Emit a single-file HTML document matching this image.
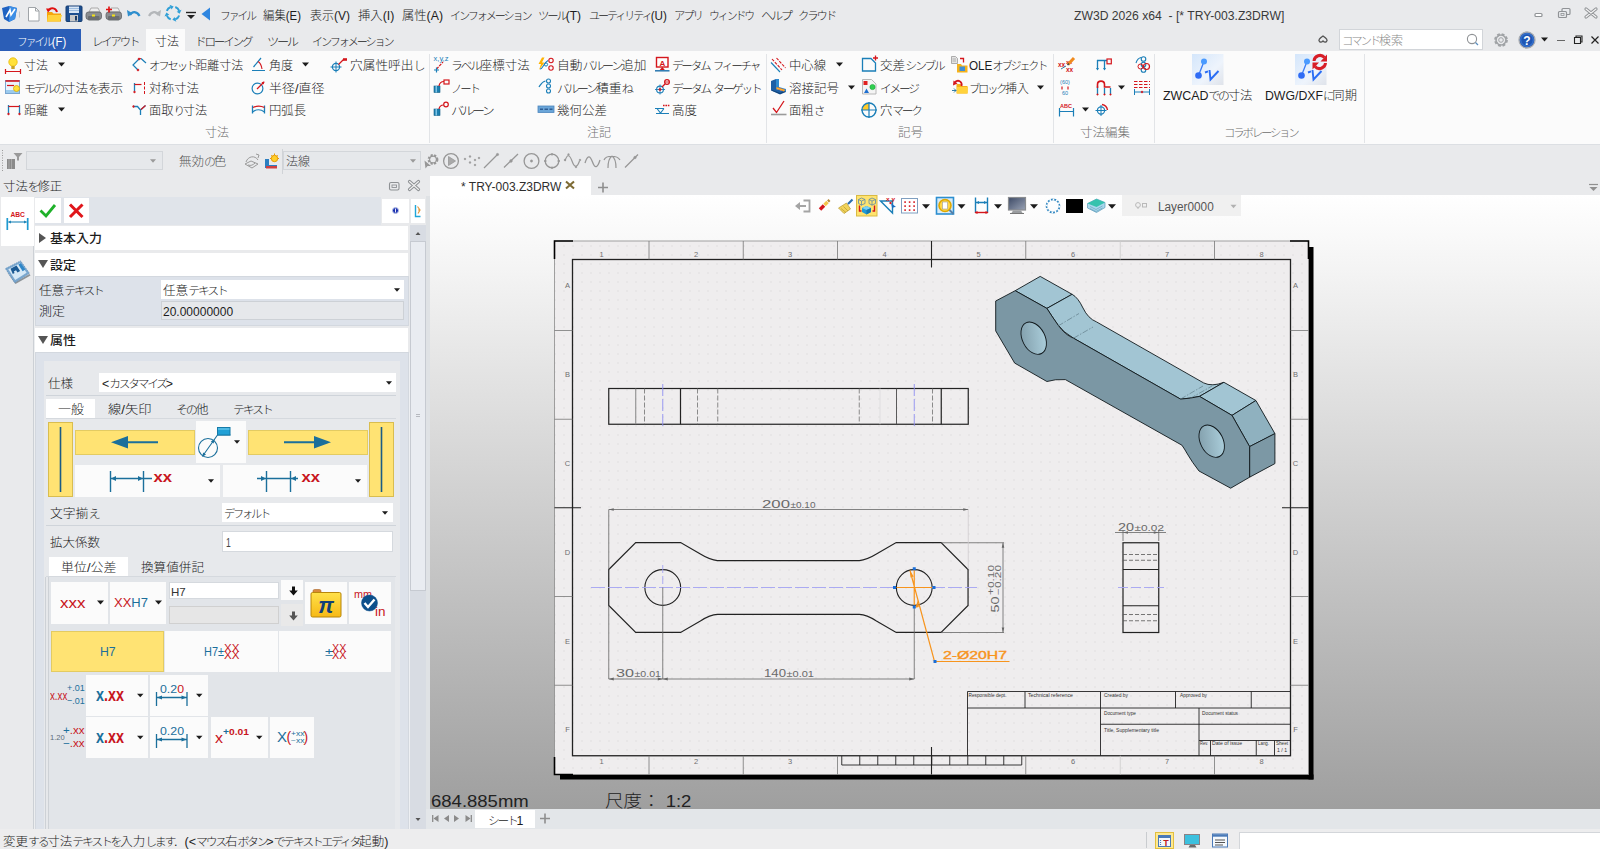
<!DOCTYPE html><html lang="ja"><head><meta charset="utf-8"><title>ZW3D 2026 x64 - [* TRY-003.Z3DRW]</title><style>

html,body{margin:0;padding:0}
body{width:1600px;height:849px;overflow:hidden;background:#e9eaec;position:relative;font-family:"Liberation Sans","Noto Sans CJK JP",sans-serif;color:#1c1c1c;font-weight:300}
div{position:absolute}
.t{position:absolute;white-space:nowrap;display:inline-block;transform-origin:0 50%}
.t i{font-style:normal;font-size:.95em;letter-spacing:-.19em}
svg{position:absolute;left:0;top:0}
svg text{font-family:"Liberation Sans","Noto Sans CJK JP",sans-serif}
.z{font-size:7.5px;fill:#6e6e6e;text-anchor:middle}
.dm{font-size:10.5px;fill:#6a6a6a}
.dt{font-size:8.5px;fill:#6a6a6a}
.an{font-size:10.5px;fill:#f7941d;stroke:#f7941d;stroke-width:.35px}
.tb{font-size:4.6px;fill:#333}

</style></head><body>
<div style="left:430px;top:195px;width:1170px;height:614px;background:linear-gradient(#ffffff 0%,#f4f4f4 12%,#9f9f9f 100%);"></div>
<div style="left:1121.5px;top:195px;width:119.5px;height:21px;background:#f0f0f0;"></div>
<span id="t1" class="t" style="left:1158px;top:198px;font-size:12px;line-height:18px;color:#555;transform:scaleX(0.9825);">Layer0000</span>
<span id="t2" class="t" style="left:431px;top:791.8px;font-size:17px;line-height:20px;color:#222;transform:scaleX(1.0889);">684.885mm</span>
<span id="t3" class="t" style="left:605px;top:791.8px;font-size:17px;line-height:20px;color:#222;transform:scaleX(1.0886);white-space:pre;">尺度： 1:2</span>
<div style="left:0px;top:176px;width:430px;height:653px;background:#e9eaec;"></div>
<div style="left:0px;top:196px;width:34px;height:633px;background:#e9eaec;"></div>
<div style="left:1px;top:197px;width:32.5px;height:49px;background:#fff;"></div>
<div style="left:32.5px;top:246px;width:3px;height:583px;background:#eceef0;border:0 solid #ccd0d5;border-width:0 1px;box-sizing:border-box;"></div>
<div style="left:36px;top:196px;width:372px;height:633px;background:#dde2ea;"></div>
<div style="left:408px;top:196px;width:2px;height:633px;background:#eef0f3;"></div>
<div style="left:410px;top:224.5px;width:15.5px;height:604.5px;background:#d8dce3;"></div>
<div style="left:410px;top:241px;width:15.5px;height:350px;background:#e9ecf1;border:1px solid #c6cad1;box-sizing:border-box;"></div>
<div style="left:425.5px;top:196px;width:4.5px;height:633px;background:#dfe2e5;"></div>
<div style="left:34px;top:196px;width:392px;height:29px;background:#e9eaec;"></div>
<div style="left:35px;top:197px;width:346px;height:27.5px;background:#e0e4ea;"></div>
<div style="left:35px;top:198px;width:26px;height:25px;background:#fff;"></div>
<div style="left:64px;top:198px;width:25px;height:25px;background:#fff;"></div>
<div style="left:382px;top:198.5px;width:27px;height:24.5px;background:#fff;"></div>
<div style="left:411px;top:198.5px;width:14px;height:24.5px;background:#fff;"></div>
<div style="left:35px;top:225px;width:375px;height:128px;background:#e9eaec;"></div>
<div style="left:35px;top:276px;width:374px;height:50px;background:#d3d8df;"></div>
<div style="left:36px;top:277px;width:372px;height:48px;background:#dde2ea;"></div>
<div style="left:35px;top:352px;width:374px;height:477px;background:#d3d8df;"></div>
<div style="left:36px;top:353px;width:372px;height:476px;background:#dde2ea;"></div>
<div style="left:35px;top:226px;width:373px;height:24px;background:#fff;"></div>
<span id="t4" class="t" style="left:50px;top:230px;font-size:12px;line-height:18px;font-weight:500;transform:scaleX(1.0833);">基本入力</span>
<div style="left:35px;top:253px;width:373px;height:23px;background:#fff;"></div>
<span id="t5" class="t" style="left:50px;top:256.5px;font-size:12px;line-height:18px;font-weight:500;transform:scaleX(1.0833);">設定</span>
<div style="left:35px;top:328px;width:373px;height:24px;background:#fff;"></div>
<span id="t6" class="t" style="left:50px;top:332px;font-size:12px;line-height:18px;font-weight:500;transform:scaleX(1.0833);">属性</span>
<span id="t7" class="t" style="left:39px;top:282px;font-size:12px;line-height:18px;transform:scaleX(1.0492);">任意<i>テキスト</i></span>
<span id="t8" class="t" style="left:39px;top:303px;font-size:12px;line-height:18px;transform:scaleX(1.0833);">測定</span>
<div style="left:161px;top:280px;width:243px;height:19px;background:#fff;"></div>
<span id="t9" class="t" style="left:163px;top:282px;font-size:12px;line-height:18px;transform:scaleX(1.0492);">任意<i>テキスト</i></span>
<div style="left:161px;top:301px;width:243px;height:19px;background:#e6e8eb;border:1px solid #cdd1d6;box-sizing:border-box;"></div>
<span id="t10" class="t" style="left:163px;top:303px;font-size:12px;line-height:18px;transform:scaleX(1.0000);">20.00000000</span>
<div style="left:44px;top:361px;width:356px;height:468px;background:#e7e9ec;"></div>
<div style="left:45px;top:577px;width:3.5px;height:252px;background:#e6e8eb;border:0 solid #cdd1d6;border-width:0 1px;box-sizing:border-box;"></div>
<span id="t11" class="t" style="left:48px;top:375px;font-size:12px;line-height:18px;transform:scaleX(1.0417);">仕様</span>
<div style="left:99px;top:373px;width:297px;height:19px;background:#fff;"></div>
<span id="t12" class="t" style="left:102px;top:375px;font-size:12px;line-height:18px;transform:scaleX(1.0290);">&lt;<i>カスタマイズ</i>&gt;</span>
<div style="left:46px;top:395px;width:350px;height:1px;background:#cfd4da;"></div>
<div style="left:46px;top:399px;width:49px;height:19px;background:#fff;"></div>
<span id="t13" class="t" style="left:58px;top:401px;font-size:12px;line-height:18px;transform:scaleX(1.0833);">一般</span>
<span id="t14" class="t" style="left:108px;top:401px;font-size:12px;line-height:18px;transform:scaleX(1.1026);">線/矢印</span>
<span id="t15" class="t" style="left:176px;top:401px;font-size:12px;line-height:18px;transform:scaleX(1.0667);"><i>その</i>他</span>
<span id="t16" class="t" style="left:233px;top:401px;font-size:12px;line-height:18px;transform:scaleX(1.0541);"><i>テキスト</i></span>
<div style="left:46px;top:418px;width:350px;height:1px;background:#d5d9de;"></div>
<div style="left:48px;top:422px;width:25px;height:75px;background:#ffe373;border:1px solid #d9bd4f;box-sizing:border-box;"></div>
<div style="left:369px;top:422px;width:25px;height:75px;background:#ffe373;border:1px solid #d9bd4f;box-sizing:border-box;"></div>
<div style="left:75px;top:430px;width:120px;height:25px;background:#ffe373;border:1px solid #e3cb62;box-sizing:border-box;"></div>
<div style="left:248px;top:430px;width:120px;height:25px;background:#ffe373;border:1px solid #e3cb62;box-sizing:border-box;"></div>
<div style="left:196px;top:421px;width:50px;height:42px;background:#fbfbfb;"></div>
<div style="left:75px;top:465px;width:145px;height:32px;background:#fbfbfb;"></div>
<div style="left:223px;top:465px;width:144px;height:32px;background:#fbfbfb;"></div>
<span id="t17" class="t" style="left:50px;top:505px;font-size:12px;line-height:18px;transform:scaleX(1.0667);">文字揃<i>え</i></span>
<div style="left:222px;top:503px;width:171px;height:19px;background:#fff;"></div>
<span id="t18" class="t" style="left:224px;top:505px;font-size:12px;line-height:18px;transform:scaleX(0.9783);"><i>デフォルト</i></span>
<div style="left:46px;top:525px;width:350px;height:1px;background:#cfd4da;"></div>
<span id="t19" class="t" style="left:50px;top:534px;font-size:12px;line-height:18px;transform:scaleX(1.0417);">拡大係数</span>
<div style="left:222px;top:531px;width:171px;height:21px;background:#fff;border:1px solid #d5d9de;box-sizing:border-box;"></div>
<span id="t20" class="t" style="left:226px;top:534px;font-size:12px;line-height:18px;color:#444;transform:scaleX(0.7143);">1</span>
<div style="left:49px;top:557px;width:79px;height:19px;background:#fff;"></div>
<span id="t21" class="t" style="left:61px;top:559px;font-size:12px;line-height:18px;transform:scaleX(1.0784);">単位/公差</span>
<span id="t22" class="t" style="left:141px;top:559px;font-size:12px;line-height:18px;transform:scaleX(1.0500);">換算値併記</span>
<div style="left:46px;top:576px;width:350px;height:1px;background:#d5d9de;"></div>
<div style="left:48.5px;top:577px;width:346px;height:252px;background:#e2e5e9;"></div>
<div style="left:51px;top:582px;width:57px;height:42px;background:#fbfbfb;"></div>
<div style="left:110px;top:582px;width:56px;height:42px;background:#fbfbfb;"></div>
<div style="left:169px;top:582px;width:110px;height:17px;background:#fff;border:1px solid #d5d9de;box-sizing:border-box;"></div>
<div style="left:169px;top:606px;width:110px;height:18px;background:#e6e6e6;border:1px solid #d0d0d0;box-sizing:border-box;"></div>
<span id="t23" class="t" style="left:171px;top:583.5px;font-size:11.5px;line-height:17px;color:#333;transform:scaleX(1.0000);">H7</span>
<div style="left:281px;top:580px;width:22px;height:20px;background:#fbfbfb;"></div>
<div style="left:281px;top:604px;width:22px;height:22px;background:#e9e9e9;"></div>
<div style="left:305px;top:582px;width:42px;height:42px;background:#fbfbfb;"></div>
<div style="left:349px;top:582px;width:42px;height:42px;background:#fbfbfb;"></div>
<span id="t24" class="t" style="left:60px;top:592px;font-size:15px;line-height:22px;color:#c8161d;transform:scaleX(1.1304);">xxx</span>
<span id="t25" class="t" style="left:114px;top:593px;font-size:13px;line-height:20px;transform:scaleX(1.0000);"><span style="color:#c8161d">XX</span><span style="color:#1b6f9b">H7</span></span>
<div style="left:51px;top:631px;width:113px;height:41px;background:#ffe373;border:1px solid #e3cb62;box-sizing:border-box;"></div>
<div style="left:165px;top:631px;width:113px;height:41px;background:#fbfbfb;"></div>
<div style="left:279px;top:631px;width:112px;height:41px;background:#fbfbfb;"></div>
<span id="t26" class="t" style="left:100px;top:642px;font-size:13px;line-height:20px;color:#1b6f9b;transform:scaleX(0.9412);">H7</span>
<span id="t27" class="t" style="left:204px;top:643px;font-size:12px;line-height:18px;color:#1b6f9b;transform:scaleX(0.9091);">H7±</span>
<span id="t28" class="t" style="left:224px;top:640.5px;font-size:10px;line-height:15px;color:#c8161d;transform:scaleX(1.1538);">XX</span>
<span id="t29" class="t" style="left:224px;top:648px;font-size:10px;line-height:15px;color:#c8161d;transform:scaleX(1.1538);">XX</span>
<span id="t30" class="t" style="left:325px;top:644px;font-size:11px;line-height:16px;color:#1b6f9b;transform:scaleX(1.3333);">±</span>
<span id="t31" class="t" style="left:332px;top:640.5px;font-size:10px;line-height:15px;color:#c8161d;transform:scaleX(1.0769);">XX</span>
<span id="t32" class="t" style="left:332px;top:648px;font-size:10px;line-height:15px;color:#c8161d;transform:scaleX(1.0769);">XX</span>
<div style="left:86px;top:675px;width:62px;height:41px;background:#fbfbfb;"></div>
<div style="left:150px;top:675px;width:58px;height:41px;background:#fbfbfb;"></div>
<span id="t33" class="t" style="left:96px;top:682px;font-size:18px;line-height:27px;font-weight:700;transform:scaleX(0.8000);"><span style="color:#1b6f9b">x</span><span style="color:#c8161d">.xx</span></span>
<span id="t34" class="t" style="left:160px;top:680.5px;font-size:10.5px;line-height:16px;color:#1b6f9b;transform:scaleX(1.1750);">0.2<span style="color:#c8161d">0</span></span>
<div style="left:86px;top:717px;width:62px;height:41px;background:#fbfbfb;"></div>
<div style="left:150px;top:717px;width:58px;height:41px;background:#fbfbfb;"></div>
<span id="t35" class="t" style="left:96px;top:724px;font-size:18px;line-height:27px;font-weight:700;transform:scaleX(0.8000);"><span style="color:#1b6f9b">x</span><span style="color:#c8161d">.xx</span></span>
<span id="t36" class="t" style="left:160px;top:722.5px;font-size:10.5px;line-height:16px;color:#1b6f9b;transform:scaleX(1.1750);">0.2<span style="color:#1b6f9b">0</span></span>
<div style="left:211px;top:717px;width:57px;height:41px;background:#fbfbfb;"></div>
<div style="left:270px;top:717px;width:44px;height:41px;background:#fbfbfb;"></div>
<span id="t37" class="t" style="left:215px;top:727.5px;font-size:14px;line-height:21px;color:#c8161d;transform:scaleX(1.1429);">x</span>
<span id="t38" class="t" style="left:223px;top:724.5px;font-size:9.5px;line-height:14px;color:#c8161d;font-weight:700;transform:scaleX(1.0833);"><span style="color:#1b6f9b">+</span>0.01</span>
<span id="t39" class="t" style="left:277px;top:726px;font-size:15px;line-height:22px;color:#1b6f9b;transform:scaleX(1.0000);">X</span>
<span id="t40" class="t" style="left:286.5px;top:726.5px;font-size:14px;line-height:21px;color:#c8161d;transform:scaleX(1.0000);">(</span>
<span id="t41" class="t" style="left:291px;top:729px;font-size:6.5px;line-height:10px;color:#1b6f9b;transform:scaleX(1.3000);">+xx</span>
<span id="t42" class="t" style="left:291px;top:735.5px;font-size:6.5px;line-height:10px;color:#1b6f9b;transform:scaleX(1.3000);">−xx</span>
<span id="t43" class="t" style="left:303.5px;top:726.5px;font-size:14px;line-height:21px;color:#c8161d;transform:scaleX(1.0000);">)</span>
<span id="t44" class="t" style="left:50px;top:686.5px;font-size:12px;line-height:18px;color:#c8161d;transform:scaleX(0.8095);">x.xx</span>
<span id="t45" class="t" style="left:67px;top:680.5px;font-size:9.5px;line-height:14px;color:#1b6f9b;transform:scaleX(0.9474);"><b>+</b>.01</span>
<span id="t46" class="t" style="left:67px;top:693.5px;font-size:9.5px;line-height:14px;color:#1b6f9b;transform:scaleX(0.9474);"><b>−</b>.01</span>
<span id="t47" class="t" style="left:50px;top:732px;font-size:8px;line-height:12px;color:#5a6a7a;transform:scaleX(0.9375);">1.20</span>
<span id="t48" class="t" style="left:63px;top:722px;font-size:11px;line-height:16px;color:#c8161d;transform:scaleX(1.0476);"><b style="color:#1b6f9b">+</b>.xx</span>
<span id="t49" class="t" style="left:63px;top:735px;font-size:11px;line-height:16px;color:#c8161d;transform:scaleX(1.0476);"><b style="color:#1b6f9b">−</b>.xx</span>
<div style="left:0px;top:0px;width:1600px;height:51px;background:#e9eaec;"></div>
<div style="left:0px;top:51px;width:1600px;height:93px;background:#fbfbfb;"></div>
<div style="left:0px;top:144px;width:1600px;height:1px;background:#dcdfe3;"></div>
<div style="left:0px;top:145px;width:1600px;height:31px;background:#e9eaec;"></div>
<span id="t50" class="t" style="left:1074px;top:6.5px;font-size:12.5px;line-height:19px;color:#3a3a3a;transform:scaleX(0.9722);white-space:pre;">ZW3D 2026 x64  - [* TRY-003.Z3DRW]</span>
<span id="t51" class="t" style="left:220px;top:7px;font-size:12px;line-height:18px;transform:scaleX(0.9459);"><i>ファイル</i></span>
<span id="t52" class="t" style="left:263px;top:7px;font-size:12px;line-height:18px;transform:scaleX(0.9500);">編集(E)</span>
<span id="t53" class="t" style="left:310px;top:7px;font-size:12px;line-height:18px;transform:scaleX(1.0000);">表示(V)</span>
<span id="t54" class="t" style="left:358px;top:7px;font-size:12px;line-height:18px;transform:scaleX(1.0286);">挿入(I)</span>
<span id="t55" class="t" style="left:402px;top:7px;font-size:12px;line-height:18px;transform:scaleX(1.0250);">属性(A)</span>
<span id="t56" class="t" style="left:450px;top:7px;font-size:12px;line-height:18px;transform:scaleX(0.9756);"><i>インフォメーション</i></span>
<span id="t57" class="t" style="left:538px;top:7px;font-size:12px;line-height:18px;transform:scaleX(1.0000);"><i>ツール</i>(T)</span>
<span id="t58" class="t" style="left:589px;top:7px;font-size:12px;line-height:18px;transform:scaleX(0.9750);"><i>ユーティリティ</i>(U)</span>
<span id="t59" class="t" style="left:674px;top:7px;font-size:12px;line-height:18px;transform:scaleX(1.0000);"><i>アプリ</i></span>
<span id="t60" class="t" style="left:709px;top:7px;font-size:12px;line-height:18px;transform:scaleX(0.9565);"><i>ウィンドウ</i></span>
<span id="t61" class="t" style="left:761px;top:7px;font-size:12px;line-height:18px;transform:scaleX(1.0714);"><i>ヘルプ</i></span>
<span id="t62" class="t" style="left:798px;top:7px;font-size:12px;line-height:18px;transform:scaleX(1.0000);"><i>クラウド</i></span>
<div style="left:0px;top:29px;width:81px;height:22px;background:#2b5eb7;"></div>
<span id="t63" class="t" style="left:17px;top:33px;font-size:12px;line-height:18px;color:#fff;transform:scaleX(0.9423);"><i>ファイル</i>(F)</span>
<div style="left:146px;top:29px;width:39px;height:23px;background:#fbfbfb;"></div>
<span id="t64" class="t" style="left:92px;top:33px;font-size:12px;line-height:18px;transform:scaleX(1.0000);"><i>レイアウト</i></span>
<span id="t65" class="t" style="left:155px;top:33px;font-size:12px;line-height:18px;transform:scaleX(1.0000);">寸法</span>
<span id="t66" class="t" style="left:195px;top:33px;font-size:12px;line-height:18px;transform:scaleX(1.0182);"><i>ドローイング</i></span>
<span id="t67" class="t" style="left:267px;top:33px;font-size:12px;line-height:18px;transform:scaleX(1.0714);"><i>ツール</i></span>
<span id="t68" class="t" style="left:312px;top:33px;font-size:12px;line-height:18px;transform:scaleX(0.9756);"><i>インフォメーション</i></span>
<div style="left:1339px;top:29px;width:144px;height:21px;background:#fff;border:1px solid #d2d5d9;box-sizing:border-box;"></div>
<span id="t69" class="t" style="left:1342px;top:32px;font-size:12px;line-height:18px;color:#8a8a8a;transform:scaleX(1.0000);"><i>コマンド</i>検索</span>
<div style="left:429px;top:54px;width:1px;height:89px;background:#e2e4e7;"></div>
<div style="left:766px;top:54px;width:1px;height:89px;background:#e2e4e7;"></div>
<div style="left:1053px;top:54px;width:1px;height:89px;background:#e2e4e7;"></div>
<div style="left:1154px;top:54px;width:1px;height:89px;background:#e2e4e7;"></div>
<div style="left:1364px;top:54px;width:1px;height:89px;background:#e2e4e7;"></div>
<span id="t70" class="t" style="left:24px;top:57px;font-size:12px;line-height:18px;transform:scaleX(1.0000);">寸法</span>
<span id="t71" class="t" style="left:24px;top:80px;font-size:12px;line-height:18px;transform:scaleX(1.0532);"><i>モデルの</i>寸法<i>を</i>表示</span>
<span id="t72" class="t" style="left:24px;top:102px;font-size:12px;line-height:18px;transform:scaleX(1.0000);">距離</span>
<span id="t73" class="t" style="left:149px;top:57px;font-size:12px;line-height:18px;transform:scaleX(1.0000);"><i>オフセット</i>距離寸法</span>
<span id="t74" class="t" style="left:149px;top:80px;font-size:12px;line-height:18px;transform:scaleX(1.0417);">対称寸法</span>
<span id="t75" class="t" style="left:149px;top:102px;font-size:12px;line-height:18px;transform:scaleX(1.0175);">面取<i>り</i>寸法</span>
<span id="t76" class="t" style="left:269px;top:57px;font-size:12px;line-height:18px;transform:scaleX(1.0000);">角度</span>
<span id="t77" class="t" style="left:269px;top:80px;font-size:12px;line-height:18px;transform:scaleX(1.0784);">半径/直径</span>
<span id="t78" class="t" style="left:269px;top:102px;font-size:12px;line-height:18px;transform:scaleX(1.0278);">円弧長</span>
<span id="t79" class="t" style="left:350px;top:57px;font-size:12px;line-height:18px;transform:scaleX(1.0580);">穴属性呼出<i>し</i></span>
<span id="t80" class="t" style="left:451px;top:57px;font-size:12px;line-height:18px;transform:scaleX(1.0395);"><i>ラベル</i>座標寸法</span>
<span id="t81" class="t" style="left:451px;top:80px;font-size:12px;line-height:18px;transform:scaleX(1.0000);"><i>ノート</i></span>
<span id="t82" class="t" style="left:451px;top:102px;font-size:12px;line-height:18px;transform:scaleX(1.1389);"><i>バルーン</i></span>
<span id="t83" class="t" style="left:557px;top:57px;font-size:12px;line-height:18px;transform:scaleX(1.0595);">自動<i>バルーン</i>追加</span>
<span id="t84" class="t" style="left:557px;top:80px;font-size:12px;line-height:18px;transform:scaleX(1.0714);"><i>バルーン</i>積重<i>ね</i></span>
<span id="t85" class="t" style="left:557px;top:102px;font-size:12px;line-height:18px;transform:scaleX(1.0417);">幾何公差</span>
<span id="t86" class="t" style="left:672px;top:57px;font-size:12px;line-height:18px;transform:scaleX(1.0116);"><i>データム</i> <i>フィーチャ</i></span>
<span id="t87" class="t" style="left:672px;top:80px;font-size:12px;line-height:18px;transform:scaleX(1.0233);"><i>データム</i> <i>ターゲット</i></span>
<span id="t88" class="t" style="left:672px;top:102px;font-size:12px;line-height:18px;transform:scaleX(1.0417);">高度</span>
<span id="t89" class="t" style="left:789px;top:57px;font-size:12px;line-height:18px;transform:scaleX(1.0278);">中心線</span>
<span id="t90" class="t" style="left:789px;top:80px;font-size:12px;line-height:18px;transform:scaleX(1.0417);">溶接記号</span>
<span id="t91" class="t" style="left:789px;top:102px;font-size:12px;line-height:18px;transform:scaleX(1.0303);">面粗<i>さ</i></span>
<span id="t92" class="t" style="left:880px;top:57px;font-size:12px;line-height:18px;transform:scaleX(1.0492);">交差<i>シンブル</i></span>
<span id="t93" class="t" style="left:880px;top:80px;font-size:12px;line-height:18px;transform:scaleX(1.0270);"><i>イメージ</i></span>
<span id="t94" class="t" style="left:880px;top:102px;font-size:12px;line-height:18px;transform:scaleX(1.0250);">穴<i>マーク</i></span>
<span id="t95" class="t" style="left:969px;top:57px;font-size:12px;line-height:18px;transform:scaleX(0.9747);">OLE<i>オブジェクト</i></span>
<span id="t96" class="t" style="left:969px;top:80px;font-size:12px;line-height:18px;transform:scaleX(0.9836);"><i>ブロック</i>挿入</span>
<span id="t97" class="t" style="left:1163px;top:87px;font-size:12px;line-height:18px;transform:scaleX(1.0349);">ZWCAD<i>での</i>寸法</span>
<span id="t98" class="t" style="left:1265px;top:87px;font-size:12px;line-height:18px;transform:scaleX(1.0222);">DWG/DXF<i>に</i>同期</span>
<span id="t99" class="t" style="left:205px;top:124px;font-size:12px;line-height:18px;color:#6e6e6e;transform:scaleX(1.0000);">寸法</span>
<span id="t100" class="t" style="left:587px;top:124px;font-size:12px;line-height:18px;color:#6e6e6e;transform:scaleX(1.0000);">注記</span>
<span id="t101" class="t" style="left:898px;top:124px;font-size:12px;line-height:18px;color:#6e6e6e;transform:scaleX(1.0417);">記号</span>
<span id="t102" class="t" style="left:1080px;top:124px;font-size:12px;line-height:18px;color:#6e6e6e;transform:scaleX(1.0417);">寸法編集</span>
<span id="t103" class="t" style="left:1224px;top:124px;font-size:12px;line-height:18px;color:#6e6e6e;transform:scaleX(1.0000);"><i>コラボレーション</i></span>
<div style="left:26px;top:151px;width:137px;height:19px;background:#e6e8eb;border:1px solid #d3d6da;box-sizing:border-box;"></div>
<span id="t104" class="t" style="left:179px;top:153px;font-size:12px;line-height:18px;color:#555;transform:scaleX(1.0444);">無効<i>の</i>色</span>
<div style="left:283px;top:151px;width:138px;height:19px;background:#e6e8eb;border:1px solid #d3d6da;box-sizing:border-box;"></div>
<span id="t105" class="t" style="left:286px;top:153px;font-size:12px;line-height:18px;color:#444;transform:scaleX(1.0000);">法線</span>
<span id="t106" class="t" style="left:3px;top:178px;font-size:12px;line-height:18px;transform:scaleX(1.0351);">寸法<i>を</i>修正</span>
<div style="left:430px;top:175.5px;width:160.5px;height:19.5px;background:#fff;"></div>
<span id="t107" class="t" style="left:461px;top:177.5px;font-size:12.5px;line-height:19px;color:#2e2e2e;transform:scaleX(0.9615);">* TRY-003.Z3DRW</span>
<div style="left:426px;top:809px;width:1174px;height:20px;background:#e3e6e9;"></div>
<div style="left:0px;top:829px;width:1600px;height:20px;background:#ededee;"></div>
<div style="left:475px;top:810px;width:59.5px;height:18px;background:#fff;"></div>
<span id="t108" class="t" style="left:488px;top:811.5px;font-size:12px;line-height:18px;transform:scaleX(1.0294);"><i>シート</i>1</span>
<span id="t109" class="t" style="left:3px;top:833px;font-size:12px;line-height:18px;transform:scaleX(1.0434);white-space:pre;">変更<i>する</i>寸法<i>テキストを</i>入力<i>します</i>.  (&lt;<i>マウス</i>右<i>ボタン</i>&gt;<i>でテキストエディタ</i>起動)</span>
<div style="left:1238.5px;top:831.5px;width:362px;height:18px;background:#fff;border:1px solid #d3d6da;box-sizing:border-box;"></div>
<svg width="1600" height="849" viewBox="0 0 1600 849"><defs><pattern id="dots" x="563.5" y="245.5" width="9" height="9" patternUnits="userSpaceOnUse"><rect x="0" y="0" width="1" height="1" fill="#d2d0d2"/></pattern>
<linearGradient id="hole" x1="0" y1="0" x2="1" y2="0.6"><stop offset="0" stop-color="#7d99a6"/><stop offset="1" stop-color="#a9ccd9"/></linearGradient>
<linearGradient id="bga" x1="0" y1="0" x2="1" y2="1"><stop offset="0" stop-color="#d4e6fb"/><stop offset="0.6" stop-color="#eef4fc"/><stop offset="1" stop-color="#dfe3ea"/></linearGradient>
<linearGradient id="bgb" x1="0" y1="0" x2="1" y2="1"><stop offset="0" stop-color="#d4e6fb"/><stop offset="0.6" stop-color="#eef4fc"/><stop offset="1" stop-color="#dfe3ea"/></linearGradient>
<linearGradient id="mon" x1="0" y1="0" x2="1" y2="1"><stop offset="0" stop-color="#3d4a66"/><stop offset="1" stop-color="#9aa3b5"/></linearGradient>
<linearGradient id="pi" x1="0" y1="0" x2="0" y2="1"><stop offset="0" stop-color="#ffe14a"/><stop offset="1" stop-color="#f7b916"/></linearGradient></defs>
<path d="M560 774.5h753.5V247h-5" fill="none" stroke="#000" stroke-width="0"/>
<rect x="1308.5" y="247" width="5" height="532.5" fill="#000"/><rect x="560" y="774.5" width="753.5" height="5" fill="#000"/>
<rect x="554.5" y="241" width="754.0" height="533.5" fill="#efedee"/>
<rect x="554.5" y="241" width="754.0" height="533.5" fill="url(#dots)"/>
<rect x="554.5" y="241" width="754.0" height="533.5" fill="none" stroke="#8c8c8c" stroke-width="0.8"/>
<path d="M554.5 259V241H573M1290 241H1308.5V259M554.5 757V774.5H573" fill="none" stroke="#000" stroke-width="1.6"/>
<rect x="572.5" y="259.5" width="718.0" height="496.25" fill="none" stroke="#222" stroke-width="1.3"/>
<path d="M649 241V259.5M649 755.75V774.5M743.25 241V259.5M743.25 755.75V774.5M837.5 241V259.5M837.5 755.75V774.5M1025.75 241V259.5M1025.75 755.75V774.5M1214.5 241V259.5M1214.5 755.75V774.5M554.5 330.5H572.5M1290.5 330.5H1308.5M554.5 419.25H572.5M1290.5 419.25H1308.5M554.5 596.5H572.5M1290.5 596.5H1308.5M554.5 685.25H572.5M1290.5 685.25H1308.5" stroke="#777" stroke-width="0.8" fill="none"/>
<path d="M1120.25 241V259.5M1120.25 755.75V774.5" stroke="#ccc" stroke-width="0.8"/>
<path d="M931.5 241V267.5M931.5 747V774.5M554.5 507.75H581M1282 507.75H1308.5" stroke="#222" stroke-width="1.1"/>
<text x="601.5" y="257" class="z">1</text>
<text x="601.5" y="764" class="z">1</text>
<text x="696" y="257" class="z">2</text>
<text x="696" y="764" class="z">2</text>
<text x="790" y="257" class="z">3</text>
<text x="790" y="764" class="z">3</text>
<text x="884.5" y="257" class="z">4</text>
<text x="978.5" y="257" class="z">5</text>
<text x="1073" y="257" class="z">6</text>
<text x="1073" y="764" class="z">6</text>
<text x="1167" y="257" class="z">7</text>
<text x="1167" y="764" class="z">7</text>
<text x="1261.5" y="257" class="z">8</text>
<text x="1261.5" y="764" class="z">8</text>
<text x="567.5" y="288.2" class="z">A</text><text x="1295.5" y="288.2" class="z">A</text>
<text x="567.5" y="377.2" class="z">B</text><text x="1295.5" y="377.2" class="z">B</text>
<text x="567.5" y="466.2" class="z">C</text><text x="1295.5" y="466.2" class="z">C</text>
<text x="567.5" y="554.7" class="z">D</text><text x="1295.5" y="554.7" class="z">D</text>
<text x="567.5" y="643.7" class="z">E</text><text x="1295.5" y="643.7" class="z">E</text>
<text x="567.5" y="732.2" class="z">F</text><text x="1295.5" y="732.2" class="z">F</text>
<path d="M841.75 756V765M859.75 756V765M877.75 756V765M895.75 756V765M913.75 756V765M931.75 756V765M949.75 756V765M967.75 756V765M985.75 756V765M1003.75 756V765M1021.75 756V765M841.75 765H1021.75" stroke="#222" stroke-width="0.9" fill="none"/>
<rect x="608.75" y="388.5" width="359.5" height="35.75" fill="none" stroke="#222" stroke-width="1.2"/>
<path d="M680.5 388.5v35.75M941.25 388.5v35.75" stroke="#222" stroke-width="1.2"/>
<path d="M635.75 388.5v35.75" stroke="#858585" stroke-width="1"/><path d="M896.5 388.5v35.75" stroke="#4a4a4a" stroke-width="0.9"/><path d="M880 388.5v35.75" stroke="#dcdadc" stroke-width="0.8"/>
<path d="M644.5 388.5v35.75M697.5 388.5v35.75M717.75 388.5v35.75M859.25 388.5v35.75M932.5 388.5v35.75" stroke="#707070" stroke-width="0.8" stroke-dasharray="5 2"/>
<path d="M662.75 384v45M914.25 384v45" stroke="#8f8ff0" stroke-width="0.9" stroke-dasharray="12 3"/>
<path d="M608.75 569.53L635.70 542.59L680.61 542.59L700.37 554.09Q710.25 560.19 717.44 560.55L859.36 560.55Q866.55 560.19 876.43 554.09L896.19 542.59L941.10 542.59L968.05 569.53L968.05 605.47L941.10 632.41L896.19 632.41L876.43 620.91Q866.55 614.81 859.36 614.45L717.44 614.45Q710.25 614.81 700.37 620.91L680.61 632.41L635.70 632.41L608.75 605.47Z" fill="none" stroke="#222" stroke-width="1.2"/>
<circle cx="662.75" cy="587.5" r="17.9" fill="none" stroke="#222" stroke-width="1.1"/><circle cx="914.25" cy="587.5" r="17.9" fill="none" stroke="#222" stroke-width="1.1"/>
<path d="M591 587.5H977" stroke="#a3a3f2" stroke-width="0.9" stroke-dasharray="14 3"/>
<path d="M662.75 565v22" stroke="#a3a3f2" stroke-width="0.9" stroke-dasharray="8 3"/>
<path d="M608.75 569V509.5M608.75 509.5H968.25M608.75 606V679M662.75 587.5V679M914.25 605V679M608.75 679H914.25M941.5 542.75H1004M941.5 632.5H1004M1003 542.75V632.5" stroke="#666" stroke-width="0.8" fill="none"/>
<path d="M968.25 569V509.5" stroke="#cfcdcf" stroke-width="0.8"/>
<path d="M608.75 509.5l5-1.2v2.4zM968.25 509.5l-5-1.2v2.4zM608.75 679l5-1.5v3zM662.75 679l-5-1.5v3zM662.75 679l5-1.5v3zM914.25 679l-5-1.5v3zM1003 542.75l-1.3 5h2.6zM1003 632.5l-1.3-5h2.6z" fill="#666"/>
<text x="762" y="507.5" class="dm" lengthAdjust="spacingAndGlyphs" textLength="28">200</text>
<text x="790.5" y="507.5" class="dt" lengthAdjust="spacingAndGlyphs" textLength="25">±0.10</text>
<text x="616" y="676.5" class="dm" lengthAdjust="spacingAndGlyphs" textLength="18">30</text>
<text x="634.5" y="676.5" class="dt" lengthAdjust="spacingAndGlyphs" textLength="26.5">±0.01</text>
<text x="764" y="676.5" class="dm" lengthAdjust="spacingAndGlyphs" textLength="22">140</text>
<text x="786.5" y="676.5" class="dt" lengthAdjust="spacingAndGlyphs" textLength="27.5">±0.01</text>
<text transform="translate(999 612.5) rotate(-90)" class="dm" lengthAdjust="spacingAndGlyphs" textLength="16">50</text>
<text transform="translate(994 595) rotate(-90)" class="dt" lengthAdjust="spacingAndGlyphs" textLength="30">+0.10</text>
<text transform="translate(1000.5 595) rotate(-90)" class="dt" lengthAdjust="spacingAndGlyphs" textLength="30">−0.20</text>
<rect x="1123" y="542.75" width="35.75" height="89.75" fill="none" stroke="#222" stroke-width="1.2"/>
<path d="M1123 569.5h35.75M1123 605.75h35.75" stroke="#222" stroke-width="1"/>
<path d="M1123 554.5h35.75M1123 560.25h35.75M1123 614.5h35.75M1123 620.75h35.75" stroke="#555" stroke-width="0.8" stroke-dasharray="4 2"/>
<path d="M1118 587.5h46" stroke="#a3a3f2" stroke-width="0.9" stroke-dasharray="10 3"/>
<path d="M1115 532.5h51M1123 541v-11M1158.75 541v-11" stroke="#666" stroke-width="0.8"/>
<path d="M1123 532.5l5-1.3v2.6zM1158.75 532.5l-5-1.3v2.6z" fill="#666"/>
<text x="1118" y="531" class="dm" lengthAdjust="spacingAndGlyphs" textLength="16">20</text>
<text x="1134.5" y="531" class="dt" lengthAdjust="spacingAndGlyphs" textLength="29.5">±0.02</text>
<path d="M896.5 587.5h35.5M914.25 570v35M910 570.5L934.5 661.5H1009.5" stroke="#f7941d" stroke-width="1.2" fill="none"/>
<path d="M910 570.5l0.5 7 3.2-1zM918 600l0.8 7-3.4 0.8z" fill="#f7941d"/>
<text x="943" y="658.5" class="an" lengthAdjust="spacingAndGlyphs" textLength="64">2-Ø20H7</text>
<rect x="912.75" y="567.25" width="3" height="3" fill="#1a6ed8"/>
<rect x="893.0" y="586.0" width="3" height="3" fill="#1a6ed8"/>
<rect x="932.5" y="586.0" width="3" height="3" fill="#1a6ed8"/>
<rect x="912.75" y="605.5" width="3" height="3" fill="#1a6ed8"/>
<rect x="933.5" y="660.0" width="3" height="3" fill="#1a6ed8"/>
<path d="M967.5 755.75V691.5H1290.5M967.5 708H1290.5M1025 691.5V708M1100.5 691.5V755.75M1175.5 691.5V708M1251.25 691.5V708M1199 708V755.75M1100.5 724.25H1290.5M1199 740.5H1290.5M1210.5 740.5V755.75M1256.25 740.5V755.75M1274.5 740.5V755.75" stroke="#222" stroke-width="0.9" fill="none"/>
<text x="968.5" y="696.7" class="tb" textLength="38" lengthAdjust="spacingAndGlyphs">Responsible dept.</text>
<text x="1028" y="696.7" class="tb" textLength="45" lengthAdjust="spacingAndGlyphs">Technical reference</text>
<text x="1104" y="696.7" class="tb" textLength="24" lengthAdjust="spacingAndGlyphs">Created by</text>
<text x="1180" y="696.7" class="tb" textLength="27" lengthAdjust="spacingAndGlyphs">Approved by</text>
<text x="1104" y="714.7" class="tb" textLength="32" lengthAdjust="spacingAndGlyphs">Document type</text>
<text x="1202" y="714.7" class="tb" textLength="36" lengthAdjust="spacingAndGlyphs">Document status</text>
<text x="1104" y="731.5" class="tb" textLength="55" lengthAdjust="spacingAndGlyphs">Title, Supplementary title</text>
<text x="1200" y="744.7" class="tb" textLength="8" lengthAdjust="spacingAndGlyphs">Rev.</text>
<text x="1212" y="744.7" class="tb" textLength="30" lengthAdjust="spacingAndGlyphs">Date of issue</text>
<text x="1258" y="744.7" class="tb" textLength="11" lengthAdjust="spacingAndGlyphs">Lang.</text>
<text x="1276" y="744.7" class="tb" textLength="12" lengthAdjust="spacingAndGlyphs">Sheet</text>
<text x="1277" y="751.7" class="tb" textLength="10" lengthAdjust="spacingAndGlyphs">1 / 1</text>
<path d="M1015.2 290.7L1040.2 276.4L1072.1 294.3L1046.9 308.4Z" fill="#a2c5d3" stroke="#10181c" stroke-width="0.9" stroke-linejoin="round"/>
<path d="M1046.9 308.4L1072.1 294.3Q1078 297.5 1083 308T1096.5 321.9L1203.6 382.9Q1212 387 1223.9 382.3L1199.5 396.4Q1190 398.5 1180.5 399.1L1073.5 338.2Q1063 332 1058 325T1046.9 308.4Z" fill="#a2c5d3" stroke="#10181c" stroke-width="0.9" stroke-linejoin="round"/>
<path d="M1199.5 396.4L1223.9 382.3L1255.9 400.5L1232 415.4Z" fill="#a2c5d3" stroke="#10181c" stroke-width="0.9" stroke-linejoin="round"/>
<path d="M1232 415.4L1255.9 400.5L1274.9 433.6L1249.6 446.6Z" fill="#8fb1bf" stroke="#10181c" stroke-width="0.9" stroke-linejoin="round"/>
<path d="M1249.6 446.6L1274.9 433.6L1274.9 463.6L1249.6 477.2Z" fill="#7c98a5" stroke="#10181c" stroke-width="0.9" stroke-linejoin="round"/>
<path d="M995.7 301L1015.2 290.7L1046.9 308.4Q1051 315 1058 325T1073.5 338.2L1180.5 399.1Q1190 398.5 1199.5 396.4L1232 415.4L1249.6 446.6L1249.6 477.2L1230.7 488.2L1199 471Q1192 462 1188 455T1181.9 445.2L1065.4 379.6Q1055 379 1046.9 381.5L1014.7 363.1L995.7 330.9Z" fill="#7b97a4" stroke="#10181c" stroke-width="0.9" stroke-linejoin="round"/>
<ellipse cx="1033.7" cy="338.2" rx="11.3" ry="17.2" transform="rotate(-27 1033.7 338.2)" fill="url(#hole)" stroke="#10181c" stroke-width="0.9"/>
<ellipse cx="1211.7" cy="441.2" rx="11.3" ry="17.2" transform="rotate(-27 1211.7 441.2)" fill="url(#hole)" stroke="#10181c" stroke-width="0.9"/>
<path d="M1058 326L1079 313.5M1073.5 338.2L1093 327M1180.5 399.1L1203 386M1190 398.5L1212 386" stroke="#55707c" stroke-width="0.6" stroke-dasharray="6 1.5 1.5 1.5" fill="none"/>
<path d="M39 233v10l7-5z" fill="#555"/>
<path d="M38 260h10l-5 8z" fill="#555"/>
<path d="M38 336h10l-5 8z" fill="#555"/>
<path d="M394 288.3h6l-3 3.4z" fill="#1c1c1c"/>
<path d="M386 381.3h6l-3 3.4z" fill="#1c1c1c"/>
<path d="M60.5 427v65M381.5 427v65" stroke="#1a5c86" stroke-width="1.6"/>
<path d="M111 442.3l17-6.2v5.2h30v2h-30v5.2z" fill="#1b6f9b"/>
<path d="M331 442.3l-17-6.2v5.2h-30v2h30v5.2z" fill="#1b6f9b"/>
<path d="M234 440.3h6l-3 3.4z" fill="#1c1c1c"/>
<path d="M208 479.3h6l-3 3.4z" fill="#1c1c1c"/>
<path d="M355 479.3h6l-3 3.4z" fill="#1c1c1c"/>
<path d="M382 511.3h6l-3 3.4z" fill="#1c1c1c"/>
<path d="M97 600.5h7l-3.5 4.0z" fill="#1c1c1c"/>
<path d="M155 600.5h7l-3.5 4.0z" fill="#1c1c1c"/>
<path d="M137 693.65h6.5l-3.25 3.7z" fill="#1c1c1c"/>
<path d="M196 693.65h6.5l-3.25 3.7z" fill="#1c1c1c"/>
<path d="M156.5 692v14M187 692v14M157 697.5h30" stroke="#1b6f9b" stroke-width="1.3" fill="none"/>
<path d="M157 697.5l5-2v4zM186.5 697.5l-5-2v4z" fill="#1b6f9b"/>
<path d="M137 735.65h6.5l-3.25 3.7z" fill="#1c1c1c"/>
<path d="M196 735.65h6.5l-3.25 3.7z" fill="#1c1c1c"/>
<path d="M156.5 734v14M187 734v14M157 739.5h30" stroke="#1b6f9b" stroke-width="1.3" fill="none"/>
<path d="M157 739.5l5-2v4zM186.5 739.5l-5-2v4z" fill="#1b6f9b"/>
<path d="M256 735.65h6.5l-3.25 3.7z" fill="#1c1c1c"/>
<path d="M58 62.5h7l-3.5 4.0z" fill="#1c1c1c"/>
<path d="M58 107.5h7l-3.5 4.0z" fill="#1c1c1c"/>
<path d="M302 62.5h7l-3.5 4.0z" fill="#1c1c1c"/>
<path d="M836 62.5h7l-3.5 4.0z" fill="#1c1c1c"/>
<path d="M848 85.5h7l-3.5 4.0z" fill="#1c1c1c"/>
<path d="M1037 85.5h7l-3.5 4.0z" fill="#1c1c1c"/>
<path d="M1118 85.5h7l-3.5 4.0z" fill="#1c1c1c"/>
<path d="M1082 107.5h7l-3.5 4.0z" fill="#1c1c1c"/>
<path d="M1541 37.5h7l-3.5 4.0z" fill="#1c1c1c"/>
<path d="M150 159.3h6l-3 3.4z" fill="#9a9a9a"/>
<path d="M410 159.3h6l-3 3.4z" fill="#9a9a9a"/>
<path d="M2 8l7-2 8 2-2 11-6 3-5-3z" fill="#1f62c2" />
<path d="M9 6l8 2-2 11-6 3z" fill="#3d8fe6" />
<path d="M6 17l4-7 1 5 4-6" stroke="#fff" stroke-width="1.6" fill="none" />
<path d="M19.5 11.5v6" stroke="#c4c6c9" stroke-width="1" fill="none" />
<path d="M28.5 7.5h7l3.5 3.5v10h-10.5z" fill="#fff" stroke="#a0a4a8" stroke-width="1"/>
<path d="M35.5 7.5v3.5h3.5" stroke="#a0a4a8" stroke-width="1" fill="none" />
<path d="M47 12h5l1.5 1.5h7.5v8h-14z" fill="#f6a40a" />
<path d="M48 15h14l-2 6.5h-13z" fill="#ffd23c" />
<path d="M57 12c-1-4-6-5-8-2" stroke="#e01010" stroke-width="2" fill="none" />
<path d="M46 8.5l5.5 0-3.5 4z" fill="#e01010" />
<rect x="66" y="6" width="16" height="15.5" fill="#1d4f90" stroke="#163d70" stroke-width="1" rx="1"/>
<rect x="69" y="6.5" width="10" height="6.5" fill="#d9e6f5" stroke="none" stroke-width="1" rx="0"/>
<path d="M69 8.5h10M69 10.5h10" stroke="#8db1d9" stroke-width="0.8" fill="none" />
<rect x="70" y="15" width="8" height="6.5" fill="#c9c9c9" stroke="none" stroke-width="1" rx="0"/>
<rect x="75" y="16" width="2" height="4.5" fill="#1d3d66" stroke="none" stroke-width="1" rx="0"/>
<path d="M89 12l2-4h7l2 4z" fill="#eee" stroke="#999" stroke-width="0.8"/>
<rect x="86" y="12" width="15.5" height="7.5" fill="#8a8d90" stroke="#5f6265" stroke-width="0.8" rx="2.5"/>
<rect x="88" y="16" width="11.5" height="4.5" fill="#6b6e71" stroke="none" stroke-width="0" rx="1"/>
<rect x="92" y="14.5" width="3" height="2" fill="#f2e21a" stroke="none" stroke-width="1" rx="0"/>
<path d="M109 12l2-4h7l2 4z" fill="#eee" stroke="#999" stroke-width="0.8"/>
<rect x="106" y="12" width="15.5" height="7.5" fill="#8a8d90" stroke="#5f6265" stroke-width="0.8" rx="2.5"/>
<rect x="108" y="16" width="11.5" height="4.5" fill="#6b6e71" stroke="none" stroke-width="0" rx="1"/>
<rect x="112" y="14.5" width="3" height="2" fill="#f2e21a" stroke="none" stroke-width="1" rx="0"/>
<path d="M106 9.5h6M109 6.5v6" stroke="#e01010" stroke-width="1.6" fill="none" />
<path d="M130 15c2-4 7-4 9.5 1" stroke="#2f8fce" stroke-width="2.2" fill="none" />
<path d="M127 10l1 6.5 5-3z" fill="#2f8fce" />
<path d="M149 16c2.5-5 7.5-5 9.5-1" stroke="#b4b7ba" stroke-width="2.2" fill="none" />
<path d="M161 10l-1 6.5-5-3z" fill="#b4b7ba" />
<g transform="rotate(0 173 13.2)"><path d="M166.8 10.9A6.6 6.6 0 0 1 170.7 7.0" stroke="#2f9fd6" stroke-width="2" fill="none"/><path d="M173.6 6.6L169.6 4.7L171.5 9.5z" fill="#2f9fd6"/></g>
<g transform="rotate(90 173 13.2)"><path d="M166.8 10.9A6.6 6.6 0 0 1 170.7 7.0" stroke="#2f9fd6" stroke-width="2" fill="none"/><path d="M173.6 6.6L169.6 4.7L171.5 9.5z" fill="#2f9fd6"/></g>
<g transform="rotate(180 173 13.2)"><path d="M166.8 10.9A6.6 6.6 0 0 1 170.7 7.0" stroke="#2f9fd6" stroke-width="2" fill="none"/><path d="M173.6 6.6L169.6 4.7L171.5 9.5z" fill="#2f9fd6"/></g>
<g transform="rotate(270 173 13.2)"><path d="M166.8 10.9A6.6 6.6 0 0 1 170.7 7.0" stroke="#2f9fd6" stroke-width="2" fill="none"/><path d="M173.6 6.6L169.6 4.7L171.5 9.5z" fill="#2f9fd6"/></g>
<path d="M186 12.5h10" stroke="#222" stroke-width="1.4" fill="none" />
<path d="M187 15h8l-4 4z" fill="#222" />
<path d="M201.5 14l8.5-6.5v13z" fill="#2f86e0" />
<rect x="1535" y="13.5" width="7" height="3" fill="#fff" stroke="#909396" stroke-width="1.2" rx="1"/>
<rect x="1562" y="8.5" width="8" height="6" fill="#e9ebee" stroke="#909396" stroke-width="1.2" rx="1"/>
<rect x="1558.5" y="11.5" width="8" height="6" fill="#e9ebee" stroke="#909396" stroke-width="1.2" rx="1"/>
<rect x="1561" y="13.5" width="3" height="2" fill="none" stroke="#909396" stroke-width="0.8" rx="0"/>
<path d="M1586 9l10 8M1596 9l-10 8" stroke="#909396" stroke-width="3.2" fill="none" stroke-linecap="round"/>
<path d="M1586 9l10 8M1596 9l-10 8" stroke="#f4f4f4" stroke-width="1.2" fill="none" stroke-linecap="round"/>
<path d="M1319.5 41.5c-1.5-1.5 0-3 3.5-5.5 3.5 2.5 5 4 3.5 5.5-1 1-2.5 0.5-3.5-0.5-1 1-2.5 1.5-3.5 0.500z" stroke="#555" stroke-width="1.3" fill="none" />
<circle cx="1472" cy="39" r="4.6" stroke="#8f9295" fill="none" stroke-width="1.1"/>
<path d="M1475.5 42.500l2.5 2.5" stroke="#5b8fc0" stroke-width="1.3" fill="none" />
<g stroke="#a0a3a6" fill="none"><circle cx="1501" cy="40" r="5.6" stroke-width="2.6" stroke-dasharray="2.6 1.8"/><circle cx="1501" cy="40" r="5" stroke-width="1.6"/><circle cx="1501" cy="40" r="2.3" stroke-width="1"/></g>
<circle cx="1527" cy="40" r="8" stroke="#a9acb0" fill="#1e56b4" stroke-width="1.3"/>
<circle cx="1527" cy="40" r="6.3" stroke="#4a86e0" fill="#1e56b4" stroke-width="0.8"/>
<text x="1527" y="44.5" font-size="12" fill="#fff" font-weight="700" text-anchor="middle" >?</text>
<path d="M1557 40.500h8" stroke="#666" stroke-width="1" fill="none" />
<path d="M1574.5 37.500h6v6h-6zM1576 37.500v-1.500h6v6h-1.5" stroke="#222" stroke-width="1.1" fill="none" />
<path d="M1591.5 36.500l7 7M1598.5 36.500l-7 7" stroke="#222" stroke-width="1.2" fill="none" />
<path d="M1589 184.500h9" stroke="#909090" stroke-width="1.2" fill="none" />
<path d="M1589.5 187h8l-4 4z" fill="#909090" />
<circle cx="13" cy="62" r="4.2" stroke="#e8b800" fill="#ffe13a" stroke-width="0.8"/>
<rect x="11.3" y="66" width="3.4" height="3" fill="#c9a227" stroke="none" stroke-width="1" rx="0"/>
<path d="M5 71.500h16M5.5 69v5M20.5 69v5" stroke="#d4161c" stroke-width="1.2" fill="none" />
<rect x="5.5" y="80.5" width="14" height="13" fill="#eaf3fb" stroke="#7aa6d0" stroke-width="1" rx="0"/>
<path d="M5.5 81h14" stroke="#d4161c" stroke-width="1.6" fill="none" />
<path d="M7 85.500h7" stroke="#d4161c" stroke-width="1.2" fill="none" />
<rect x="6" y="90" width="13" height="3" fill="#9ccbee" stroke="none" stroke-width="1" rx="0"/>
<circle cx="16.5" cy="88.5" r="3" stroke="#d9a800" fill="#ffe13a" stroke-width="0.8"/>
<path d="M8.5 105v9M19.5 105v9" stroke="#1b7fb8" stroke-width="1.3" fill="none" />
<path d="M8.5 106.500h11" stroke="#d4161c" stroke-width="1.2" fill="none" />
<circle cx="8.5" cy="114" r="0.9" stroke="#d4161c" fill="#d4161c" stroke-width="0.5"/>
<circle cx="19.5" cy="114" r="0.9" stroke="#d4161c" fill="#d4161c" stroke-width="0.5"/>
<path d="M139 59l-6 6 5 5M141 58.500l5 4.5" stroke="#1b7fb8" stroke-width="1.2" fill="none" />
<circle cx="139" cy="59" r="1" stroke="#d4161c" fill="#d4161c" stroke-width="0.5"/>
<circle cx="138" cy="70" r="1" stroke="#d4161c" fill="#d4161c" stroke-width="0.5"/>
<path d="M139 59l2-0.5" stroke="#d4161c" stroke-width="1.2" fill="none" />
<path d="M134.5 83v8" stroke="#1b7fb8" stroke-width="1.3" fill="none" />
<path d="M134.5 84.500h7" stroke="#d4161c" stroke-width="1.2" fill="none" />
<path d="M144.5 82v13" stroke="#d4161c" stroke-width="1" fill="none" stroke-dasharray="3 1.5"/>
<circle cx="134.5" cy="92" r="0.9" stroke="#d4161c" fill="#d4161c" stroke-width="0.5"/>
<path d="M133 106.500h4.500l3 3.500v5M140.5 110l5-4.5" stroke="#1b7fb8" stroke-width="1.3" fill="none" />
<circle cx="133.5" cy="106.5" r="0.9" stroke="#d4161c" fill="#d4161c" stroke-width="0.5"/>
<path d="M141 109.500l4.5-4" stroke="#d4161c" stroke-width="1.2" fill="none" />
<path d="M252 70.500h13M253.5 67l7.5-9" stroke="#1b7fb8" stroke-width="1.2" fill="none" />
<path d="M258 61.500c2.5 1.5 3.5 4 4 7.5" stroke="#d4161c" stroke-width="1.1" fill="none" />
<circle cx="257.5" cy="88.5" r="5.4" stroke="#1b7fb8" fill="none" stroke-width="1.2"/>
<path d="M257 89l7-7" stroke="#d4161c" stroke-width="1.2" fill="none" />
<path d="M264.5 81.500l-3 0.8 2.2 2.200z" fill="#d4161c" />
<path d="M252.5 105.500v8M264.5 105.500v8" stroke="#1b7fb8" stroke-width="1.3" fill="none" />
<path d="M252.5 112c4-3 8-3 12 0" stroke="#1b7fb8" stroke-width="1.2" fill="none" />
<path d="M253 107.500c4-2 7.5-2 11.5 0" stroke="#d4161c" stroke-width="1.2" fill="none" />
<circle cx="336" cy="67" r="3.6" stroke="#1b7fb8" fill="none" stroke-width="1.2"/>
<path d="M330.5 67h11M336 61.500v11" stroke="#1b7fb8" stroke-width="1" fill="none" />
<path d="M338.5 64.500l5-5" stroke="#d4161c" stroke-width="1.2" fill="none" />
<path d="M343 59.500h4" stroke="#d4161c" stroke-width="2.6" fill="none" />
<text x="433.5" y="61" font-size="6.5" fill="#1b7fb8" font-weight="400" text-anchor="start" textLength="15" lengthAdjust="spacingAndGlyphs">x,y,z</text>
<path d="M436.5 69l6.5-7" stroke="#d4161c" stroke-width="1.2" fill="none" stroke-dasharray="3 1"/>
<path d="M434 70h5M436.5 67.500v5" stroke="#1b7fb8" stroke-width="1.2" fill="none" />
<rect x="434" y="86" width="6" height="6.5" fill="#1c7fb0" stroke="#145f86" stroke-width="0.6" rx="0"/>
<rect x="435.5" y="86" width="1.5" height="6.5" fill="#7fc4e6" stroke="none" stroke-width="1" rx="0"/>
<rect x="434" y="109" width="6" height="6.5" fill="#1c7fb0" stroke="#145f86" stroke-width="0.6" rx="0"/>
<rect x="435.5" y="109" width="1.5" height="6.5" fill="#7fc4e6" stroke="none" stroke-width="1" rx="0"/>
<path d="M439 86c0.5-3 2.5-4.5 5-4.5" stroke="#d4161c" stroke-width="1.2" fill="none" />
<rect x="444" y="80" width="5" height="4" fill="none" stroke="#d4161c" stroke-width="1.2" rx="0"/>
<path d="M439 109c0.5-3 2-4 4.5-4" stroke="#d4161c" stroke-width="1.2" fill="none" />
<circle cx="446" cy="104.5" r="2.3" stroke="#d4161c" fill="none" stroke-width="1.2"/>
<path d="M542 57.500l-3.5 6.500h2.500l-2 6 5.5-7.500h-2.500l2.5-5z" fill="#ffb300" />
<path d="M540 69c3 0 3.5-6 8-8.5" stroke="#1b7fb8" stroke-width="1.1" fill="none" />
<circle cx="551" cy="60.5" r="2.2" stroke="#d4161c" fill="none" stroke-width="1.1"/>
<circle cx="551" cy="68" r="2.2" stroke="#d4161c" fill="none" stroke-width="1.1"/>
<circle cx="546" cy="64.5" r="1.6" stroke="#1b7fb8" fill="none" stroke-width="1"/>
<path d="M539 87c2-3 3-5.5 6.5-6" stroke="#1b7fb8" stroke-width="1.2" fill="none" />
<circle cx="548.5" cy="81" r="2" stroke="#1b7fb8" fill="none" stroke-width="1.1"/>
<circle cx="548.5" cy="86" r="2" stroke="#1b7fb8" fill="none" stroke-width="1.1"/>
<circle cx="548.5" cy="91" r="2" stroke="#1b7fb8" fill="none" stroke-width="1.1"/>
<rect x="538" y="106" width="16" height="6.5" fill="#6aa5d8" stroke="#4d86bd" stroke-width="0.8" rx="0"/>
<path d="M540 109.200h3M544.5 109.200h3.500M549.5 109.200h3" stroke="#2d5d94" stroke-width="1.6" fill="none" />
<rect x="656.5" y="57.5" width="11.5" height="9.5" fill="#fff" stroke="#d4161c" stroke-width="1.4" rx="0"/>
<text x="662.3" y="65.5" font-size="8" fill="#d4161c" font-weight="700" text-anchor="middle" >A</text>
<path d="M662.3 67l-2.6 3h5.200z" fill="#d4161c" />
<path d="M655 70.800h14.5" stroke="#2a78b0" stroke-width="1.5" fill="none" />
<circle cx="660" cy="89.5" r="3.4" stroke="#1b7fb8" fill="none" stroke-width="1.1"/>
<path d="M655 89.500h10M660 84.500v10" stroke="#1b7fb8" stroke-width="0.9" fill="none" />
<circle cx="660" cy="89.5" r="1.2" stroke="#d4161c" fill="#d4161c" stroke-width="0.3"/>
<path d="M662 87l3-3" stroke="#d4161c" stroke-width="1.2" fill="none" />
<circle cx="667" cy="82" r="2.4" stroke="#d4161c" fill="none" stroke-width="1.2"/>
<path d="M664.6 82h4.8" stroke="#d4161c" stroke-width="0.9" fill="none" />
<path d="M655 108.500h9M657 108.500l3.5 4.5 3.5-4.500M656 113.500h13" stroke="#1b7fb8" stroke-width="1.1" fill="none" />
<path d="M663 105.500h7" stroke="#d4161c" stroke-width="1.4" fill="none" stroke-dasharray="1.6 0.8"/>
<path d="M772 59l10 11M776.5 58l9 10" stroke="#d4161c" stroke-width="1.1" fill="none" stroke-dasharray="3 1.2"/>
<path d="M771 62.500l9 9.5" stroke="#1b7fb8" stroke-width="1.1" fill="none" />
<path d="M771 81l5-2v10l10 3-6 2.5-9-4z" fill="#1d5fa5" />
<path d="M776 79v10l10 3v-3l-7-2v-8z" fill="#2f8bd0" />
<path d="M771.5 90.500l8.5 3.5 6-2.5-1-0.5-5 2-8-3z" fill="#123f70" />
<path d="M776.5 88l8 2.5" stroke="#f0761d" stroke-width="2.2" fill="none" />
<path d="M776.5 88l8 2.5" stroke="#ffd23c" stroke-width="0.8" fill="none" />
<path d="M773 108l3.5 4.5 7.5-11.5" stroke="#d4161c" stroke-width="1.3" fill="none" />
<path d="M771 114.500h15.5" stroke="#9a9a9a" stroke-width="1.6" fill="none" />
<path d="M862.5 58.500h8.500l4.5 4.500v8h-13z" stroke="#1b7fb8" stroke-width="1.3" fill="none" />
<path d="M873 58h5M875.5 55.500v5" stroke="#d4161c" stroke-width="1.3" fill="none" />
<path d="M862.5 79.500h9l4.5 4.500v10h-13.500z" fill="#f4f4f4" stroke="#b0b0b0" stroke-width="0.9"/>
<rect x="863.5" y="81" width="4" height="4" fill="#e02020" stroke="none" stroke-width="1" rx="0"/>
<circle cx="872.5" cy="87" r="2.6" stroke="#18a838" fill="#2fce4f" stroke-width="0.6"/>
<path d="M864 93l2.5-4.5 2.5 4.500z" fill="#1e6fd0" />
<path d="M869 110v-7a7 7 0 0 0-7 7z" fill="#ffc928" />
<circle cx="869" cy="110" r="7" stroke="#1b7fb8" fill="none" stroke-width="1.4"/>
<path d="M861 110h16M869 102v16" stroke="#1b7fb8" stroke-width="1.2" fill="none" />
<path d="M951.5 56.500h4l2 2v5h-6z" fill="#e4e4e4" stroke="#9a9a9a" stroke-width="0.8"/>
<path d="M952.5 59h3.500M952.5 61h3.5" stroke="#9a9a9a" stroke-width="0.7" fill="none" />
<path d="M957 64h4l1 1.500h5.500v7h-10.500z" fill="#f6b21a" />
<rect x="959.5" y="66.5" width="5.5" height="4.5" fill="#3f8fd6" stroke="none" stroke-width="1" rx="0"/>
<path d="M960 58.500h3.500v4" stroke="#d4161c" stroke-width="1.3" fill="none" />
<path d="M956.5 84h4l1.5 2h5.500v7.500h-11z" fill="#f6b21a" />
<path d="M957 87h11l-0.5 6.500h-10.500z" fill="#ffd23c" />
<path d="M961.5 86c1-4-3-7-6.5-4" stroke="#d4161c" stroke-width="1.8" fill="none" />
<path d="M953 85.500l0.5-5 4 3z" fill="#d4161c" />
<path d="M952 90.500h4M954 88.500l2 2-2 2" stroke="#1b6f9b" stroke-width="0.9" fill="none" />
<text x="1058" y="67" font-size="6.5" fill="#d4161c" font-weight="700" text-anchor="start" >xx</text>
<text x="1066" y="72" font-size="6.5" fill="#d4161c" font-weight="700" text-anchor="start" >xx</text>
<text x="1066" y="63.5" font-size="5.5" fill="#d4161c" font-weight="700" text-anchor="start" >xx</text>
<path d="M1061 69l5-3" stroke="#1b6f9b" stroke-width="0.9" fill="none" />
<path d="M1068 64.500l6-6.5" stroke="#f08a1d" stroke-width="3" fill="none" />
<path d="M1067.5 65l1.5-1.5" stroke="#444" stroke-width="1.6" fill="none" />
<path d="M1097.5 60v9.500M1104.5 60v9.500M1097 60.500h10" stroke="#1b7fb8" stroke-width="1.3" fill="none" />
<rect x="1107" y="59" width="4.3" height="4.8" fill="none" stroke="#d4161c" stroke-width="1.2" rx="0"/>
<path d="M1096 68l1.5 2.5 1.5-2.500zM1103 68l1.5 2.5 1.5-2.500z" fill="#1b7fb8" />
<path d="M1136 63c1-3 2.5-5 5-5.5" stroke="#1b7fb8" stroke-width="1.1" fill="none" />
<circle cx="1143.5" cy="59" r="2.3" stroke="#1b7fb8" fill="none" stroke-width="1.1"/>
<circle cx="1143.5" cy="64.5" r="2.3" stroke="#1b7fb8" fill="none" stroke-width="1.1"/>
<circle cx="1143.5" cy="70" r="2.3" stroke="#1b7fb8" fill="none" stroke-width="1.1"/>
<circle cx="1146.5" cy="66.5" r="3" stroke="#d4161c" fill="none" stroke-width="1.2"/>
<circle cx="1140.5" cy="66.5" r="2.5" stroke="#d4161c" fill="none" stroke-width="1"/>
<text x="1065" y="84" font-size="5.5" fill="#1b7fb8" font-weight="400" text-anchor="middle" >(60)</text>
<text x="1065" y="95" font-size="5.5" fill="#1b7fb8" font-weight="400" text-anchor="middle" >60</text>
<path d="M1062 86.500v3M1068 86.500v3" stroke="#d4161c" stroke-width="1.2" fill="none" />
<path d="M1097.5 86v8M1104.5 88v6M1110.5 88v6" stroke="#1b7fb8" stroke-width="1.3" fill="none" />
<path d="M1097.5 88v-3.500c0-4.5 7-4.5 7 0v2.500h6" stroke="#d4161c" stroke-width="1.6" fill="none" />
<circle cx="1097.5" cy="94.5" r="0.8" stroke="#d4161c" fill="#d4161c" stroke-width="0.4"/>
<circle cx="1104.5" cy="94.5" r="0.8" stroke="#d4161c" fill="#d4161c" stroke-width="0.4"/>
<circle cx="1110.5" cy="94.5" r="0.8" stroke="#d4161c" fill="#d4161c" stroke-width="0.4"/>
<path d="M1134 81.500h16M1134 84.500h16M1134 87.500h16" stroke="#d4161c" stroke-width="1.2" fill="none" stroke-dasharray="3.5 1.5"/>
<path d="M1134.5 89v6M1149.5 89v6M1134.5 92h15" stroke="#1b7fb8" stroke-width="1" fill="none" />
<circle cx="1142" cy="92" r="1" stroke="#d4161c" fill="#d4161c" stroke-width="0.4"/>
<text x="1066" y="107.5" font-size="5.5" fill="#d4161c" font-weight="700" text-anchor="middle" >ABC</text>
<path d="M1059.5 108v8.500M1073.5 108v8.500M1059.5 111.500h14" stroke="#1b7fb8" stroke-width="1.2" fill="none" />
<circle cx="1101" cy="110.5" r="3.6" stroke="#1b7fb8" fill="none" stroke-width="1.2"/>
<path d="M1095.5 110.500h11M1101 105v11" stroke="#1b7fb8" stroke-width="1" fill="none" />
<path d="M1102 104.500c3 0.5 5 2.5 5.5 5.5" stroke="#d4161c" stroke-width="1.4" fill="none" />
<rect x="1192" y="54" width="31.5" height="31" fill="url(#bga)" stroke="none" stroke-width="1" rx="0"/>
<path d="M1204 61.500l-5.5 14" stroke="#3a7cf6" stroke-width="1.3" fill="none" />
<circle cx="1204" cy="61.5" r="3" stroke="none" fill="#4a9bff" stroke-width="0"/>
<circle cx="1198.5" cy="75.5" r="3.3" stroke="none" fill="#2f6cf5" stroke-width="0"/>
<path d="M1205 72.500l3-1.200M1209.5 70l1 9.5 8-8.5" stroke="#2a6df4" stroke-width="1.9" fill="none" />
<rect x="1295" y="54" width="31.5" height="31" fill="url(#bgb)" stroke="none" stroke-width="1" rx="0"/>
<path d="M1307 61.500l-5.5 14" stroke="#3a7cf6" stroke-width="1.3" fill="none" />
<circle cx="1307" cy="61.5" r="3" stroke="none" fill="#4a9bff" stroke-width="0"/>
<circle cx="1301.5" cy="75.5" r="3.3" stroke="none" fill="#2f6cf5" stroke-width="0"/>
<path d="M1308 72.500l3-1.200M1312.5 70l1 9.5 8-8.5" stroke="#2a6df4" stroke-width="1.9" fill="none" />
<path d="M1314 61a6 6 0 0 1 10.5-3.500M1325.5 63a6 6 0 0 1-10.5 3.5" stroke="#d81e27" stroke-width="3" fill="none" />
<path d="M1327 54.500v7h-6.500zM1312.5 69.500v-7h6.500z" fill="#d81e27" />
<path d="M2.5 150v22" stroke="#9a9a9a" stroke-width="1" fill="none" stroke-dasharray="1 1.5"/>
<rect x="7" y="159" width="8" height="10" fill="#8a8a8a" stroke="none" stroke-width="1" rx="0"/>
<path d="M9 159v10M11.5 159v10" stroke="#b0b0b0" stroke-width="0.8" fill="none" />
<path d="M13.5 153h9l-3.5 4v3.500h-2v-3.500z" fill="#9a9a9a" />
<path d="M246 162c2-6 9-7 12-2M245 164l6-3 7 3-6 4zM248 165c3 1 5 0 7-2" stroke="#9a9a9a" stroke-width="1" fill="none" />
<path d="M256 154l3 1-1 3" stroke="#9a9a9a" stroke-width="1" fill="none" />
<path d="M265 159h4v6h8v3h-12z" fill="#2d7fc0" />
<path d="M266 166h11v2.500h-11z" fill="#d04040" />
<circle cx="274.5" cy="158.5" r="3.2" stroke="#e89a00" fill="#ffcf2a" stroke-width="1"/>
<path d="M274.5 153.500v1.500M279 158.500h-1.300M270 158.500h1.300M271.3 155.300l0.9 0.900M277.7 155.300l-0.9 0.9" stroke="#e89a00" stroke-width="1" fill="none" />
<path d="M282.5 149v25" stroke="#d0d3d7" stroke-width="1" fill="none" />
<g stroke="#979797" fill="none"><circle cx="433" cy="159.5" r="4.2" stroke-width="2.4" stroke-dasharray="2 1.4"/><circle cx="433" cy="159.5" r="3.4" stroke-width="1.1"/></g>
<path d="M424.5 160.500l1 8 2-2.5 3.5 0z" fill="#979797" />
<circle cx="451" cy="161" r="7.4" stroke="#979797" fill="none" stroke-width="1.3"/>
<path d="M448.5 156.500v9l7-4.500z" fill="#a9a9a9" stroke="#979797" stroke-width="0.8"/>
<circle cx="465" cy="159" r="0.9" stroke="#979797" fill="#979797" stroke-width="0.4"/>
<circle cx="470" cy="156.5" r="0.9" stroke="#979797" fill="#979797" stroke-width="0.4"/>
<circle cx="475" cy="160" r="0.9" stroke="#979797" fill="#979797" stroke-width="0.4"/>
<circle cx="470" cy="162.5" r="0.9" stroke="#979797" fill="#979797" stroke-width="0.4"/>
<circle cx="479" cy="158" r="0.9" stroke="#979797" fill="#979797" stroke-width="0.4"/>
<circle cx="475" cy="165" r="0.9" stroke="#979797" fill="#979797" stroke-width="0.4"/>
<path d="M484 168l13-13" stroke="#979797" stroke-width="1.3" fill="none" />
<circle cx="497.5" cy="154.5" r="1.2" stroke="#979797" fill="#979797" stroke-width="0.4"/>
<path d="M504 167.500l14-13.5" stroke="#979797" stroke-width="1.3" fill="none" />
<circle cx="511" cy="161" r="1.4" stroke="#979797" fill="#979797" stroke-width="0.4"/>
<circle cx="531.5" cy="161" r="7.4" stroke="#979797" fill="none" stroke-width="1.3"/>
<circle cx="531.5" cy="161" r="1.2" stroke="#979797" fill="#979797" stroke-width="0.4"/>
<circle cx="552" cy="161" r="6.8" stroke="#979797" fill="none" stroke-width="1.3"/>
<path d="M552 153v2.500M552 166.500v2.500M544 161h2.500M557.5 161h2.5" stroke="#979797" stroke-width="1.3" fill="none" />
<path d="M565 161c2-7 4.5-7 7 0s5 7 7.5 0" stroke="#979797" stroke-width="1.2" fill="none" />
<circle cx="568.5" cy="154.5" r="0.9" stroke="#979797" fill="#979797" stroke-width="0.4"/>
<circle cx="576" cy="167" r="0.9" stroke="#979797" fill="#979797" stroke-width="0.4"/>
<circle cx="565" cy="160" r="0.9" stroke="#979797" fill="#979797" stroke-width="0.4"/>
<circle cx="580" cy="160" r="0.9" stroke="#979797" fill="#979797" stroke-width="0.4"/>
<path d="M585 163c2.5-8 5-8 7.5-1s5 6 7.5-2" stroke="#979797" stroke-width="1.3" fill="none" />
<path d="M604 160c2-5 13-5 16 0M608 168c0-6 1-10 4-12M616 168c0-6-1-10-4-12" stroke="#979797" stroke-width="1.2" fill="none" />
<path d="M625 167.500l13-13" stroke="#979797" stroke-width="1.3" fill="none" />
<circle cx="635" cy="157.5" r="1.3" stroke="#979797" fill="#979797" stroke-width="0.4"/>
<rect x="389.5" y="182.5" width="9.5" height="7.5" fill="none" stroke="#8e9194" stroke-width="1.1" rx="1.5"/>
<rect x="392" y="185" width="4.5" height="2.5" fill="none" stroke="#8e9194" stroke-width="0.9" rx="0"/>
<path d="M409.5 181.500l9 8M418.5 181.500l-9 8" stroke="#8e9194" stroke-width="3.2" fill="none" stroke-linecap="round"/>
<path d="M409.5 181.500l9 8M418.5 181.500l-9 8" stroke="#f2f2f2" stroke-width="1.1" fill="none" stroke-linecap="round"/>
<path d="M566 181.500l8 7M574 181.500l-8 7" stroke="#7d6b35" stroke-width="2.1" fill="none" />
<path d="M598 187.500h10M603 182.500v10" stroke="#8e8e8e" stroke-width="1.6" fill="none" />
<path d="M433.5 818.5l5-3.5v7zM444 818.5l5-3.5v7zM459 818.5l-5-3.5v7zM470.5 818.5l-5-3.5v7z" fill="#8a8a8a" />
<path d="M432.7 815v7M471.3 815v7" stroke="#8a8a8a" stroke-width="1.3" fill="none" />
<path d="M540 818.500h10M545 813.500v10" stroke="#8e8e8e" stroke-width="1.6" fill="none" />
<rect x="1155.5" y="832.5" width="18" height="16" fill="#ffe98f" stroke="#e2bf3f" stroke-width="1" rx="0"/>
<rect x="1158.5" y="835.5" width="12" height="11" fill="#f4f8fc" stroke="#4a7ab8" stroke-width="1" rx="0"/>
<path d="M1158.5 837h12" stroke="#4a7ab8" stroke-width="2" fill="none" />
<text x="1166" y="846" font-size="9" fill="#c02020" font-weight="700" text-anchor="middle" >T</text>
<path d="M1160.5 840v5" stroke="#4a7ab8" stroke-width="1.2" fill="none" stroke-dasharray="1 1"/>
<rect x="1184.5" y="834.5" width="15" height="10" fill="#3cc0de" stroke="#8a8286" stroke-width="1" rx="0"/>
<path d="M1190 845h5l1.5 2.500h-8z" fill="#6a6a6a" />
<rect x="1212.5" y="834" width="15" height="13" fill="#f4f8fc" stroke="#4a7ab8" stroke-width="1" rx="0"/>
<path d="M1212.5 835.500h15" stroke="#4a7ab8" stroke-width="2.4" fill="none" />
<path d="M1215 840h10M1215 842.500h10M1215 845h8" stroke="#555" stroke-width="1" fill="none" />
<path d="M1146.5 832v16" stroke="#c9cccf" stroke-width="1" fill="none" />
<path d="M803.5 200.500h6v11h-6M799 206h7" stroke="#a4a4a4" stroke-width="1.8" fill="none" />
<path d="M795 206l5-4v8z" fill="#a4a4a4" />
<path d="M820 209.500l4-4" stroke="#d4161c" stroke-width="3.4" fill="none" />
<path d="M824.5 205l3-3" stroke="#f3c54a" stroke-width="3.4" fill="none" />
<path d="M828 201.500l1.5-1.5" stroke="#b88a3a" stroke-width="2.6" fill="none" />
<path d="M838.5 208l8-5 4 6-6.5 4.500z" fill="#f2d45a" stroke="#b89a30" stroke-width="0.7"/>
<path d="M848 204l4.5-4.5" stroke="#2a6fb0" stroke-width="2.2" fill="none" />
<path d="M841 208.500l5 4M843.5 206.500l4.5 4.5" stroke="#b89a30" stroke-width="0.7" fill="none" />
<rect x="856.5" y="195.5" width="20.5" height="20.5" fill="#ffe36e" stroke="#d8ba44" stroke-width="1" rx="0"/>
<path d="M858.5 199.500l3-1.5 3.5 1.500v4l-3.5 1.5-3-1.500zM858.5 199.500l3 1.5 3.5-1.500M861.5 201v4.5" stroke="#5f8aa5" stroke-width="0.8" fill="none" />
<path d="M869 199.500l3-1.5 3.5 1.500v4l-3.5 1.5-3-1.500zM869 199.500l3 1.5 3.5-1.500M872 201v4.5" stroke="#5f8aa5" stroke-width="0.8" fill="none" />
<path d="M862 208l4.5-2 4.5 2v4l-4.5 2.5-4.5-2.500z" fill="#1f9ad6" />
<path d="M862 208l4.5 2 4.5-2-4.5-2z" fill="#7fd0f0" />
<path d="M866.5 210v4.500l4.5-2.500v-4z" fill="#1678b0" />
<path d="M859.5 205.500v5.500h2M874.5 205.500v5.500h-2" stroke="#d4161c" stroke-width="1.4" fill="none" />
<path d="M880.5 201l12 12v-12z" stroke="#1b7fb8" stroke-width="1.4" fill="none" />
<text x="886" y="200.5" font-size="6" fill="#d4161c" font-weight="700" text-anchor="start" textLength="9" lengthAdjust="spacingAndGlyphs">x y</text>
<path d="M891 203l5 4-2.5 0.3-1 2.200z" fill="#1a6fc0" />
<circle cx="890.5" cy="203" r="1" stroke="#d4161c" fill="#d4161c" stroke-width="0.3"/>
<rect x="901.5" y="198.5" width="16" height="14.5" fill="#fff" stroke="#7f9fc0" stroke-width="1" rx="0"/>
<rect x="904.3" y="201.3" width="1.6" height="1.6" fill="#d4161c" stroke="none" stroke-width="1" rx="0"/>
<rect x="904.3" y="205.3" width="1.6" height="1.6" fill="#d4161c" stroke="none" stroke-width="1" rx="0"/>
<rect x="904.3" y="209.3" width="1.6" height="1.6" fill="#d4161c" stroke="none" stroke-width="1" rx="0"/>
<rect x="908.8" y="201.3" width="1.6" height="1.6" fill="#d4161c" stroke="none" stroke-width="1" rx="0"/>
<rect x="908.8" y="205.3" width="1.6" height="1.6" fill="#d4161c" stroke="none" stroke-width="1" rx="0"/>
<rect x="908.8" y="209.3" width="1.6" height="1.6" fill="#d4161c" stroke="none" stroke-width="1" rx="0"/>
<rect x="913.3" y="201.3" width="1.6" height="1.6" fill="#d4161c" stroke="none" stroke-width="1" rx="0"/>
<rect x="913.3" y="205.3" width="1.6" height="1.6" fill="#d4161c" stroke="none" stroke-width="1" rx="0"/>
<rect x="913.3" y="209.3" width="1.6" height="1.6" fill="#d4161c" stroke="none" stroke-width="1" rx="0"/>
<path d="M922 204.2h8l-4 4.6z" fill="#1c1c1c"/>
<path d="M957.5 204.2h8l-4 4.6z" fill="#1c1c1c"/>
<path d="M994 204.2h8l-4 4.6z" fill="#1c1c1c"/>
<path d="M1030 204.2h8l-4 4.6z" fill="#1c1c1c"/>
<path d="M1108 204.2h8l-4 4.6z" fill="#1c1c1c"/>
<rect x="936.5" y="197.5" width="17" height="16.5" fill="#d9ecf8" stroke="#2d8fd0" stroke-width="1.6" rx="0"/>
<circle cx="945" cy="205.5" r="6" stroke="#e0a800" fill="#ffd84a" stroke-width="1.6"/>
<rect x="942.5" y="202" width="5" height="7" fill="#fff" stroke="#999" stroke-width="0.6" rx="0"/>
<path d="M949.5 210l4 4" stroke="#5580a8" stroke-width="2" fill="none" />
<path d="M975.5 197.500v15M987.5 197.500v15M976 202.500h11" stroke="#1b7fb8" stroke-width="1.4" fill="none" />
<path d="M976 202.500l3-1.500v3zM987 202.500l-3-1.500v3z" fill="#1b7fb8" />
<path d="M975 212.500h13" stroke="#d4161c" stroke-width="1.4" fill="none" />
<path d="M974.5 212.500l3-1.500v3zM988.5 212.500l-3-1.500v3z" fill="#d4161c" />
<rect x="1008.5" y="197.5" width="17" height="12.5" fill="url(#mon)" stroke="#8a8d90" stroke-width="1.2" rx="0"/>
<path d="M1013 210.500h8l1.5 2.500h-11z" fill="#9a9da0" />
<path d="M1010 213.500h14" stroke="#777" stroke-width="1" fill="none" />
<circle cx="1053" cy="206" r="6.6" stroke="#2f86c0" fill="none" stroke-width="1.6"/>
<circle cx="1053" cy="206" r="6.6" stroke="#fff" stroke-width="2" fill="none" stroke-dasharray="1.6 1.8"/>
<rect x="1066" y="199" width="17" height="14" fill="#000" stroke="none" stroke-width="1" rx="0"/>
<path d="M1087.5 203.500l9-4.5 8.5 3.500v5l-8.5 5-9-4.500z" fill="#a9d8ec" stroke="#5a9ab8" stroke-width="0.7"/>
<path d="M1087.5 203.500l9-4.5 8.5 3.5-8.5 4.500z" fill="#35c2ae" />
<path d="M1090 206.500l6 3 6.5-3.500M1090 208.500l6 3 6.5-3.5" stroke="#5a9ab8" stroke-width="0.6" fill="none" />
<circle cx="1138" cy="205" r="2.4" stroke="#b9b9b9" fill="none" stroke-width="1"/>
<path d="M1137 208h2" stroke="#b9b9b9" stroke-width="1" fill="none" />
<rect x="1142.5" y="203.5" width="4" height="3.5" fill="none" stroke="#b9b9b9" stroke-width="1" rx="0"/>
<path d="M1230.5 204.8h6l-3 3.4z" fill="#b0b0b0"/>
<text x="17.7" y="217" font-size="7" fill="#d4161c" font-weight="700" text-anchor="middle" textLength="14.5" lengthAdjust="spacingAndGlyphs">ABC</text>
<path d="M7.3 218v12M27.7 218v12" stroke="#1f9ad0" stroke-width="1.7" fill="none" />
<path d="M8.5 222h18" stroke="#1f86b8" stroke-width="1.1" fill="none" />
<path d="M8 222l3-1.500v3zM27 222l-3-1.500v3z" fill="#1f86b8" />
<path d="M6.5 271.5l9 12.5 15-8.5-1-1.5-14 8z" fill="#8d9398" />
<path d="M5.5 268.600l15.1-7.7 8.8 12.4-14.7 9.400z" fill="#7aa7cf" stroke="#5d8fbb" stroke-width="0.8" stroke-dasharray="1.5 0.8"/>
<path d="M8.3 269.300l11.7-6 6.6 9.4-11.4 7.300z" fill="#d6e9f7" />
<path d="M10.5 268.800l6-3.2 3.6 5.4-2.6 1.5-1.5-2.3-2.2 1.3 0.8 1.6-1.8 1z" fill="#1b5a94" />
<path d="M18.3 264.600l2.6-1.4 4.4 6.4-2.7 1.600z" fill="#2e86c8" />
<path d="M40.5 210.500l5.5 5.5 9-11" stroke="#1fb12a" stroke-width="2.8" fill="none" />
<path d="M70 204.500l12.5 12.500M82.5 204.500l-12.5 12.5" stroke="#e0161b" stroke-width="3" fill="none" />
<circle cx="395.5" cy="210.5" r="3" stroke="#b9c4e8" fill="#1a2fb0" stroke-width="1"/>
<path d="M395.5 208.500v4" stroke="#fff" stroke-width="0.9" fill="none" />
<path d="M415.5 205v11.500h5" stroke="#21a6d8" stroke-width="1.4" fill="none" />
<path d="M417.5 206.500l2.5 3.5-2 3.500M418 210h2.5" stroke="#e59a40" stroke-width="1.2" fill="none" />
<path d="M415.5 235l2.5-3 2.5 3z" fill="#555" />
<path d="M415.5 818l2.5 3 2.5-3z" fill="#555" />
<path d="M416 414.500h4M416 416.500h4" stroke="#a8acb2" stroke-width="0.8" fill="none" />
<circle cx="208" cy="448" r="9.5" stroke="#1b6f9b" fill="none" stroke-width="1.1"/>
<path d="M203 455.500l11-15.500l3.5-5h13" stroke="#1b6f9b" stroke-width="1.1" fill="none" />
<path d="M202 457l1.2-4.5 2.8 2zM214.8 439l-1.2 4.5-2.8-2z" fill="#1b6f9b" />
<rect x="217.5" y="427.5" width="12.5" height="7.5" fill="#21a0d6" stroke="#157aa8" stroke-width="1" rx="0"/>
<path d="M218 429h11.5" stroke="#7fd3f2" stroke-width="1" fill="none" />
<path d="M110.5 471v21M143.5 471v21M111 478.500h41" stroke="#1b6f9b" stroke-width="1.4" fill="none" />
<path d="M111 478.500l5-2.500v5zM143 478.500l-5-2.500v5z" fill="#1b6f9b" />
<text x="153.5" y="481.8" font-size="14" fill="#c8161d" font-weight="700" text-anchor="start" textLength="18.5" lengthAdjust="spacingAndGlyphs">xx</text>
<path d="M266.5 471v21M290.5 471v21M257 478.500h41" stroke="#1b6f9b" stroke-width="1.4" fill="none" />
<path d="M266 478.500l-5-2.500v5zM291 478.500l5-2.500v5z" fill="#1b6f9b" />
<text x="301.5" y="481.8" font-size="14" fill="#c8161d" font-weight="700" text-anchor="start" textLength="18.5" lengthAdjust="spacingAndGlyphs">xx</text>
<path d="M292 586.500h3v4h2.800l-4.3 5-4.3-5h2.800z" fill="#111" />
<path d="M292 611.500h3v4h2.800l-4.3 5-4.3-5h2.800z" fill="#555" />
<rect x="313" y="589.5" width="8" height="5" fill="#d9893a" stroke="#a8642a" stroke-width="0.6" rx="1.5"/>
<rect x="311" y="592.5" width="30" height="24.5" fill="url(#pi)" stroke="#b8860b" stroke-width="1" rx="1.5"/>
<text x="326" y="612.5" font-size="22" fill="#123f78" font-weight="700" text-anchor="middle" font-style="italic" font-family="Liberation Serif,serif">π</text>
<text x="354" y="597.5" font-size="11" fill="#c8161d" font-weight="400" text-anchor="start" textLength="18" lengthAdjust="spacingAndGlyphs">mm</text>
<text x="375" y="615.5" font-size="12" fill="#c8161d" font-weight="400" text-anchor="start" textLength="10.5" lengthAdjust="spacingAndGlyphs">in</text>
<circle cx="369.5" cy="603" r="8" stroke="#0d4f8b" fill="#0d4f8b" stroke-width="0.5"/>
<path d="M364.5 603l3.5 4 6.5-7.5" stroke="#fff" stroke-width="2.4" fill="none" />
</svg></body></html>
